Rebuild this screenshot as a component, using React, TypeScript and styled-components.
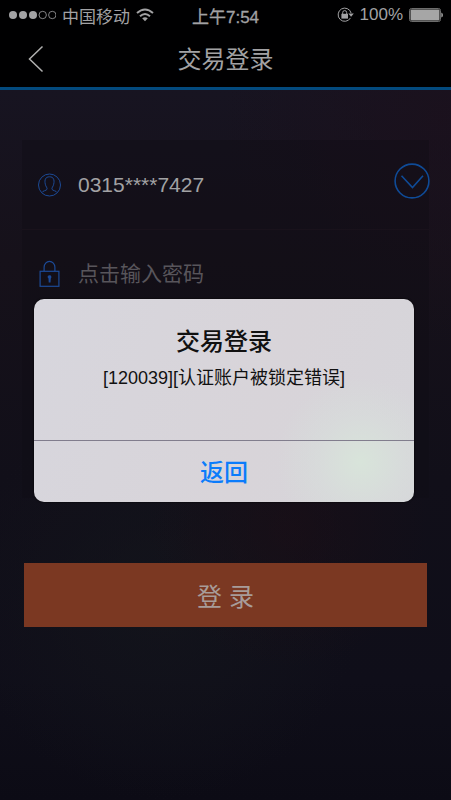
import React from "react";
import styled, { createGlobalStyle } from "styled-components";

const GlobalStyle = createGlobalStyle`
  * { box-sizing: border-box; }
  body { margin: 0; background: #100f19; }
  button, input { font: inherit; }
  svg { display: block; flex: none; }
`;

const Screen = styled.div`
  display: grid;
  min-height: 100vh;
  font-family: "Liberation Sans", "Noto Sans CJK SC", sans-serif;
  color: #a2a2a4;
  background:
    radial-gradient(circle at 64% 66%, rgba(28, 14, 22, 0.6), transparent 140px),
    radial-gradient(circle at 98% 15%, rgba(28, 16, 28, 0.7), transparent 220px),
    radial-gradient(circle at 36% 75%, rgba(20, 22, 28, 0.7), transparent 200px),
    linear-gradient(#171421 90px, #16111a 260px, #110f19 480px, #0f0e19 680px, #0c0b15);
`;

const Page = styled.div`
  grid-area: 1 / 1;
  display: flex;
  flex-direction: column;
`;

const TopBar = styled.header`
  background: #000001;
  border-bottom: 3px solid #034a7e;
`;

const StatusBar = styled.div`
  display: grid;
  grid-template-columns: 1fr auto 1fr;
  align-items: center;
  height: 30px;
  padding: 0 8px;
  font-size: 17px;
`;

const StatusGroup = styled.div<{ $end?: boolean }>`
  display: flex;
  align-items: center;
  justify-content: ${(p) => (p.$end ? "flex-end" : "flex-start")};
  gap: 6px;
`;

const Clock = styled.time`
  -webkit-text-stroke: 0.3px currentColor;
`;

const NavBar = styled.div`
  display: grid;
  grid-template-columns: 56px 1fr 56px;
  align-items: center;
  height: 57px;
`;

const BackButton = styled.button`
  display: flex;
  padding: 8px 8px 8px 28px;
  border: 0;
  background: none;
  color: #b0b0b0;
`;

const NavTitle = styled.h1`
  margin: 0;
  padding-top: 2px;
  text-align: center;
  font-size: 24px;
  line-height: 32px;
  font-weight: 400;
`;

const Form = styled.form`
  display: flex;
  flex-direction: column;
  gap: 65px;
  padding: 50px 22px;
`;

const Fields = styled.div`
  height: 358px;
  background: rgba(16, 13, 20, 0.4);
`;

const Field = styled.div`
  display: flex;
  align-items: center;
  gap: 16px;
  height: 89px;
  padding-left: 16px;
  color: #1c4a96;
  & + & { border-top: 1px solid rgba(40, 25, 38, 0.3); }
`;

const FieldInput = styled.input`
  flex: 1;
  min-width: 0;
  padding: 0;
  border: 0;
  outline: 0;
  background: none;
  color: #a2a2a4;
  font-size: 21px;
  line-height: 32px;
  &::placeholder { color: #58555b; opacity: 1; }
`;

const PickerButton = styled.button`
  display: flex;
  margin-bottom: 8px;
  margin-right: -1px;
  padding: 0;
  border: 0;
  background: none;
  color: #0f4b97;
`;

const SubmitButton = styled.button`
  height: 64px;
  margin: 0 2px;
  border: 0;
  border-radius: 0;
  background: #7b3822;
  color: #a89c99;
  font-size: 25px;
`;

const Overlay = styled.div`
  grid-area: 1 / 1;
  z-index: 1;
  display: flex;
  align-items: center;
  padding: 0 37px 0 34px;
`;

const Dialog = styled.section`
  flex: 1;
  overflow: hidden;
  border-radius: 10px;
  background:
    radial-gradient(circle at 86% 80%, #d8e4da, rgba(216, 224, 219, 0.5) 44px, transparent 84px),
    linear-gradient(110deg, #d7d6dd, #d8d4d9 60%, #d6d5da);
  color: #111;
  text-align: center;
  box-shadow: 0 0 2px #000;
`;

const DialogBody = styled.div`
  height: 141px;
  padding-top: 27px;
`;

const DialogTitle = styled.h2`
  margin: 0;
  font-size: 24px;
  line-height: 32px;
  font-weight: 500;
`;

const DialogMessage = styled.p`
  margin: 6px 0 0;
  font-size: 18px;
  line-height: 28px;
`;

const DialogAction = styled.button`
  display: block;
  width: 100%;
  height: 62px;
  padding: 0 0 2px;
  border: 0;
  border-top: 1px solid #817d8d;
  background: none;
  color: #0b7cfb;
  font-size: 24px;
  font-weight: 500;
`;

const Signal = () => (
  <svg width="48" height="10" viewBox="0 0 48 10" fill="currentColor" aria-hidden="true">
    <circle cx="5" cy="5" r="4" />
    <circle cx="15" cy="5" r="4" />
    <circle cx="25" cy="5" r="4" />
    <g fill="none" stroke="currentColor" strokeWidth="0.8">
      <circle cx="34.7" cy="5" r="3.7" />
      <circle cx="44.3" cy="5" r="3.7" />
    </g>
  </svg>
);

const Wifi = () => (
  <svg width="18" height="14" viewBox="0 0 18 14" fill="none" stroke="currentColor" strokeWidth="2" aria-hidden="true">
    <path d="M1 5Q9-2 17 5M4 8.3Q9 3.7 14 8.3" />
    <path d="M6.2 10.3Q9 8 11.8 10.3L9 13.2Z" fill="currentColor" stroke="none" />
  </svg>
);

const RotationLock = () => (
  <svg width="17" height="16" viewBox="0 0 17 16" fill="none" stroke="currentColor" aria-hidden="true">
    <path d="M13.5 10.9A6.6 6.6 0 1 1 14.1 6" />
    <path d="M11.4 6.4H16.8L14.1 9.8Z" fill="currentColor" stroke="none" />
    <rect x="4.4" y="6.8" width="6.6" height="4.8" fill="currentColor" stroke="none" />
    <path d="M5.7 7V5.6a2 2 0 0 1 4 0V7" />
  </svg>
);

const Battery = () => (
  <svg width="34" height="14" viewBox="0 0 34 14" fill="none" aria-hidden="true">
    <rect x="0.5" y="0.5" width="31" height="13" rx="2" stroke="#6c6c6c" />
    <rect x="1.5" y="1.5" width="29" height="11" rx="1" fill="#a6a6a6" />
    <path d="M32.3 4.5Q34 5 34 7T32.3 9.5Z" fill="#a0a0a0" />
  </svg>
);

const BackIcon = () => (
  <svg width="16" height="28" viewBox="0 0 16 28" fill="none" stroke="currentColor" strokeWidth="1.5" aria-hidden="true">
    <path d="M14.5 1.5L1.5 14L14.5 26.5" />
  </svg>
);

const UserIcon = () => (
  <svg width="24" height="24" viewBox="0 0 24 24" fill="none" stroke="currentColor" aria-hidden="true">
    <circle cx="11.5" cy="12" r="11" />
    <path d="M3.8 19.6C4.8 17.6 8.3 17.8 9 16.3C9.6 14.6 7.7 13.8 7.3 11.2C6.3 6.7 7.5 3.8 11.5 3.8S16.7 6.7 15.7 11.2C15.3 13.8 13.4 14.6 14 16.3C14.7 17.8 18.2 17.6 19.2 19.6" />
  </svg>
);

const LockIcon = () => (
  <svg width="24" height="28" viewBox="0 0 24 28" fill="none" stroke="currentColor" strokeWidth="1.2" aria-hidden="true">
    <rect x="2.1" y="11.3" width="18.8" height="15" />
    <path d="M6.1 11.2V7.2a5.4 5.8 0 0 1 10.8 0v4" />
    <path d="M9.6 17.2a1.9 1.9 0 1 1 3.2 1.3l-.3 4h-1.8l-.2-4Z" fill="currentColor" stroke="none" />
  </svg>
);

const ChevronCircle = () => (
  <svg width="36" height="36" viewBox="0 0 36 36" fill="none" stroke="currentColor" strokeWidth="1.6" aria-hidden="true">
    <circle cx="18" cy="18" r="16.9" />
    <path d="M7.5 12.8L18.5 24.5L29 12.8" />
  </svg>
);

export default function App() {
  return (
    <>
      <GlobalStyle />
      <Screen>
        <Page>
          <TopBar>
            <StatusBar>
              <StatusGroup>
                <Signal />
                <span>中国移动</span>
                <Wifi />
              </StatusGroup>
              <Clock>上午7:54</Clock>
              <StatusGroup $end>
                <RotationLock />
                <span>100%</span>
                <Battery />
              </StatusGroup>
            </StatusBar>
            <NavBar>
              <BackButton type="button" aria-label="后退">
                <BackIcon />
              </BackButton>
              <NavTitle>交易登录</NavTitle>
            </NavBar>
          </TopBar>
          <Form onSubmit={(e) => e.preventDefault()}>
            <Fields>
              <Field>
                <label htmlFor="account" aria-label="账户"><UserIcon /></label>
                <FieldInput id="account" defaultValue="0315****7427" />
                <PickerButton type="button" aria-label="选择账户">
                  <ChevronCircle />
                </PickerButton>
              </Field>
              <Field>
                <label htmlFor="password" aria-label="密码"><LockIcon /></label>
                <FieldInput id="password" type="password" placeholder="点击输入密码" />
              </Field>
            </Fields>
            <SubmitButton type="submit">登 录</SubmitButton>
          </Form>
        </Page>
        <Overlay>
          <Dialog role="alertdialog" aria-modal="true" aria-labelledby="alert-title" aria-describedby="alert-message">
            <DialogBody>
              <DialogTitle id="alert-title">交易登录</DialogTitle>
              <DialogMessage id="alert-message">[120039][认证账户被锁定错误]</DialogMessage>
            </DialogBody>
            <DialogAction type="button">返回</DialogAction>
          </Dialog>
        </Overlay>
      </Screen>
    </>
  );
}
